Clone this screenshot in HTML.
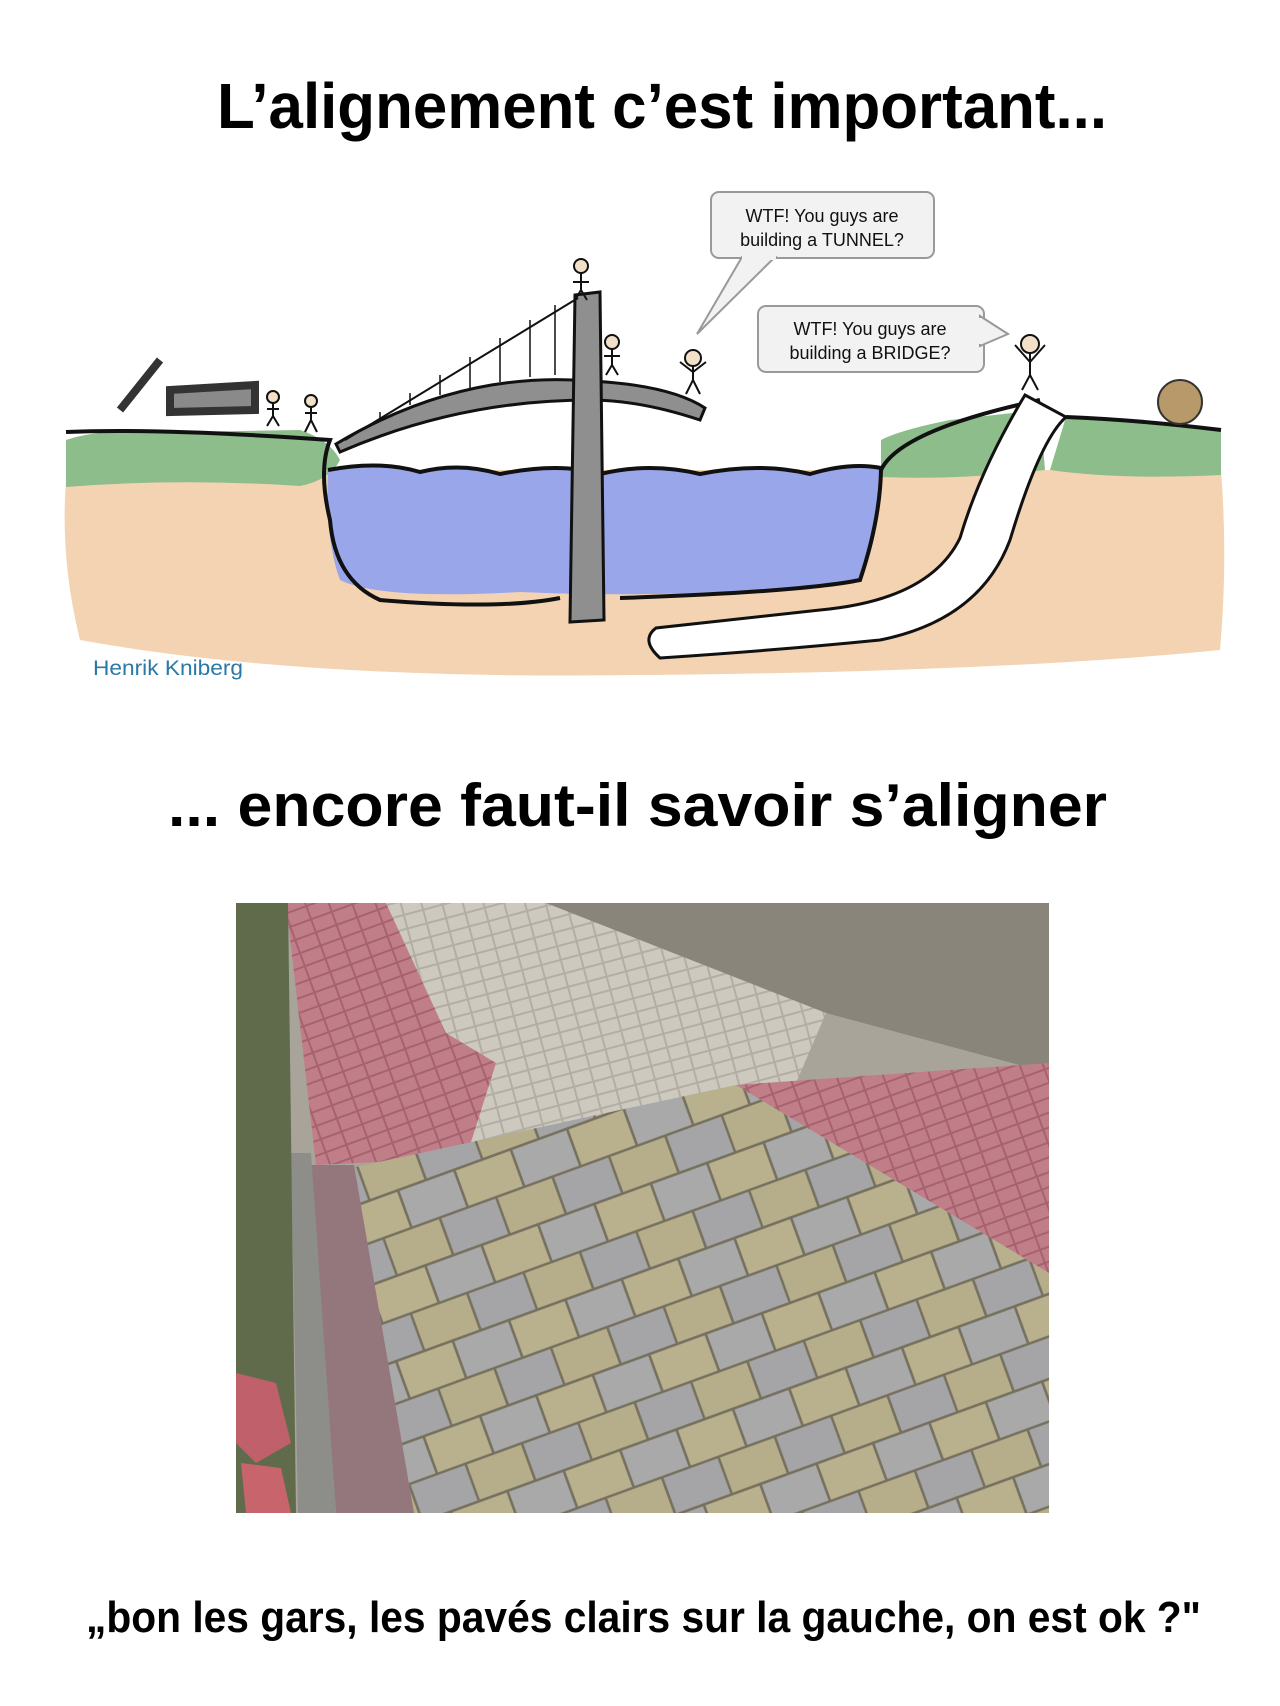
<!DOCTYPE html>
<html><head><meta charset="utf-8"><style>
html,body{margin:0;padding:0;background:#fff;}
body{width:1280px;height:1706px;position:relative;overflow:hidden;font-family:"Liberation Sans",sans-serif;}
svg{position:absolute;left:0;top:0;}
</style></head><body>
<svg width="1280" height="1706" viewBox="0 0 1280 1706">
<defs>
<pattern id="tiles" width="120" height="80" patternUnits="userSpaceOnUse" patternTransform="translate(120,260) rotate(-20)">
<rect width="120" height="80" fill="#a6a5a3"/>
<rect x="0" y="0" width="60" height="40" fill="#b6ad8a" stroke="#76715f" stroke-width="2.5"/>
<rect x="60" y="0" width="60" height="40" fill="#a5a5a7" stroke="#76715f" stroke-width="2.5"/>
<rect x="30" y="40" width="60" height="40" fill="#a9a9aa" stroke="#76715f" stroke-width="2.5"/>
<rect x="-30" y="40" width="60" height="40" fill="#b9b08e" stroke="#76715f" stroke-width="2.5"/>
<rect x="90" y="40" width="60" height="40" fill="#b9b08e" stroke="#76715f" stroke-width="2.5"/>
</pattern>
<pattern id="red" width="22" height="14" patternUnits="userSpaceOnUse" patternTransform="rotate(-20)">
<rect width="22" height="14" fill="#a8616f"/><rect width="20" height="12" fill="#c07e89"/>
</pattern>
<pattern id="cob" width="20" height="14" patternUnits="userSpaceOnUse" patternTransform="rotate(-15)">
<rect width="20" height="14" fill="#b2aea4"/><rect width="18" height="12" fill="#cdc9bf"/>
</pattern>
</defs>

<text x="217" y="128" textLength="890" lengthAdjust="spacingAndGlyphs" font-family="Liberation Sans" font-weight="bold" font-size="64" fill="#000">L’alignement c’est important...</text>

<!-- illustration -->
<path d="M66 480 Q60 560 80 640 Q300 680 640 675 Q1000 672 1220 650 Q1228 560 1221 470 L66 470Z" fill="#f3d3b1"/>
<path d="M66 440 Q100 428 170 432 L300 430 Q330 440 340 460 Q330 480 300 486 Q180 478 66 487Z" fill="#8dbd8a"/>
<path d="M881 440 Q900 430 950 420 L1040 410 L1045 470 Q960 480 881 477Z" fill="#8dbd8a"/>
<path d="M1066 417 L1221 430 L1221 475 Q1120 480 1050 470Z" fill="#8dbd8a"/>
<path d="M328 470 Q380 460 420 472 Q460 462 500 474 Q560 462 600 474 Q650 462 700 474 Q760 462 810 474 Q850 462 881 468 Q880 540 860 580 Q700 600 520 592 Q380 600 340 580 Q325 540 328 470Z" fill="#9aa6ea"/>
<path d="M328 470 Q380 460 420 472 Q460 462 500 474 Q560 462 600 474 Q650 462 700 474 Q760 462 810 474 Q850 462 881 468" fill="none" stroke="#111" stroke-width="4"/>
<path d="M66 432 Q160 428 330 440 Q318 470 330 520 Q335 580 380 600 Q500 610 560 598 M620 598 Q800 592 860 580 Q880 520 881 470 Q900 430 1040 400 M1066 417 Q1140 420 1221 430" fill="none" stroke="#111" stroke-width="4"/>
<path d="M336 444 Q460 370 590 381 Q670 385 705 408 L700 420 Q640 400 590 400 Q460 400 340 452Z" fill="#8f8f8f" stroke="#111" stroke-width="3"/>
<path d="M575 295 L600 292 L604 620 L570 622Z" fill="#8f8f8f" stroke="#111" stroke-width="3"/>
<path d="M345 440 L578 298" stroke="#111" stroke-width="2"/>
<g stroke="#111" stroke-width="1.5"><path d="M380 420V412M410 405V393M440 395V375M470 388V357M500 382V338M530 377V320M555 375V305"/></g>
<path d="M1025 395 Q980 470 960 538 Q930 600 820 610 Q680 625 656 628 Q640 640 660 658 Q780 650 880 640 Q980 620 1010 540 Q1040 440 1066 417Z" fill="#fff" stroke="#111" stroke-width="3"/>
<path d="M120 410 L160 360 M170 390 L255 385 L255 410 L170 412Z" fill="#8a8a8a" stroke="#333" stroke-width="8"/>
<circle cx="1180" cy="402" r="22" fill="#b89a6a" stroke="#333" stroke-width="2"/>
<g fill="#f3e0c8" stroke="#111" stroke-width="2">
<circle cx="581" cy="266" r="7"/><circle cx="612" cy="342" r="7"/><circle cx="693" cy="358" r="8"/><circle cx="1030" cy="344" r="9"/><circle cx="273" cy="397" r="6"/><circle cx="311" cy="401" r="6"/>
</g>
<g stroke="#111" stroke-width="2" fill="none">
<path d="M581 273V290M573 282H589M581 290L575 300M581 290L587 300"/>
<path d="M612 349V365M604 356H620M612 365L606 375M612 365L618 375"/>
<path d="M693 366V380M680 362L693 372L706 362M693 380L686 394M693 380L700 394"/>
<path d="M1030 353V375M1015 345L1030 362L1045 345M1030 375L1022 390M1030 375L1038 390"/>
<path d="M311 407V420M305 413H317M311 420L305 432M311 420L317 432"/>
<path d="M273 403V416M267 409H279M273 416L267 426M273 416L279 426"/>
</g>
<rect x="711" y="192" width="223" height="66" rx="8" fill="#f2f2f2" stroke="#999" stroke-width="2"/>
<path d="M742 257 L697 334 L775 257Z" fill="#f2f2f2" stroke="#999" stroke-width="2"/>
<rect x="742" y="256" width="34" height="4" fill="#f2f2f2"/>
<text x="822" y="222" text-anchor="middle" font-family="Liberation Sans Narrow, Liberation Sans" font-size="18" fill="#111">WTF! You guys are</text>
<text x="822" y="246" text-anchor="middle" font-family="Liberation Sans Narrow, Liberation Sans" font-size="18" fill="#111">building a TUNNEL?</text>
<rect x="758" y="306" width="226" height="66" rx="8" fill="#f2f2f2" stroke="#999" stroke-width="2"/>
<path d="M980 316 L1008 334 L980 346Z" fill="#f2f2f2" stroke="#999" stroke-width="2"/>
<rect x="978" y="318" width="4" height="26" fill="#f2f2f2"/>
<text x="870" y="335" text-anchor="middle" font-family="Liberation Sans Narrow, Liberation Sans" font-size="18" fill="#111">WTF! You guys are</text>
<text x="870" y="359" text-anchor="middle" font-family="Liberation Sans Narrow, Liberation Sans" font-size="18" fill="#111">building a BRIDGE?</text>
<text x="93" y="675" font-family="Liberation Sans" font-size="21" fill="#2a78a8" textLength="150" lengthAdjust="spacingAndGlyphs">Henrik Kniberg</text>

<text x="168" y="826" textLength="939" lengthAdjust="spacingAndGlyphs" font-family="Liberation Sans" font-weight="bold" font-size="60" fill="#000">... encore faut-il savoir s’aligner</text>

<!-- photo -->
<g transform="translate(236,903)">
<clipPath id="pc"><rect width="813" height="610"/></clipPath>
<g clip-path="url(#pc)">
<rect width="813" height="610" fill="#a9a49a"/>
<polygon points="300,0 813,0 813,170 590,110" fill="#8a857b"/>
<polygon points="120,0 310,0 590,110 560,180 500,182 230,255 200,120" fill="url(#cob)"/>
<polygon points="50,0 150,0 210,130 260,160 230,255 80,262" fill="url(#red)"/>
<polygon points="500,182 813,160 813,370" fill="url(#red)"/>
<polygon points="115,265 500,182 813,370 813,610 175,610" fill="url(#tiles)"/>
<polygon points="75,262 118,262 178,610 100,610" fill="#94777d"/>
<polygon points="55,250 75,250 100,610 62,610" fill="#8d8d8a"/>
<polygon points="0,0 52,0 60,610 0,610" fill="#5f6b4a"/>
<polygon points="0,470 40,480 55,540 20,560 0,540" fill="#c0606a"/>
<polygon points="5,560 45,565 55,610 10,610" fill="#c8646c"/>
</g></g>

<text x="86" y="1632" textLength="1115" lengthAdjust="spacingAndGlyphs" font-family="Liberation Sans" font-weight="bold" font-size="44" fill="#000">„bon les gars, les pavés clairs sur la gauche, on est ok ?"</text>
</svg>
</body></html>
